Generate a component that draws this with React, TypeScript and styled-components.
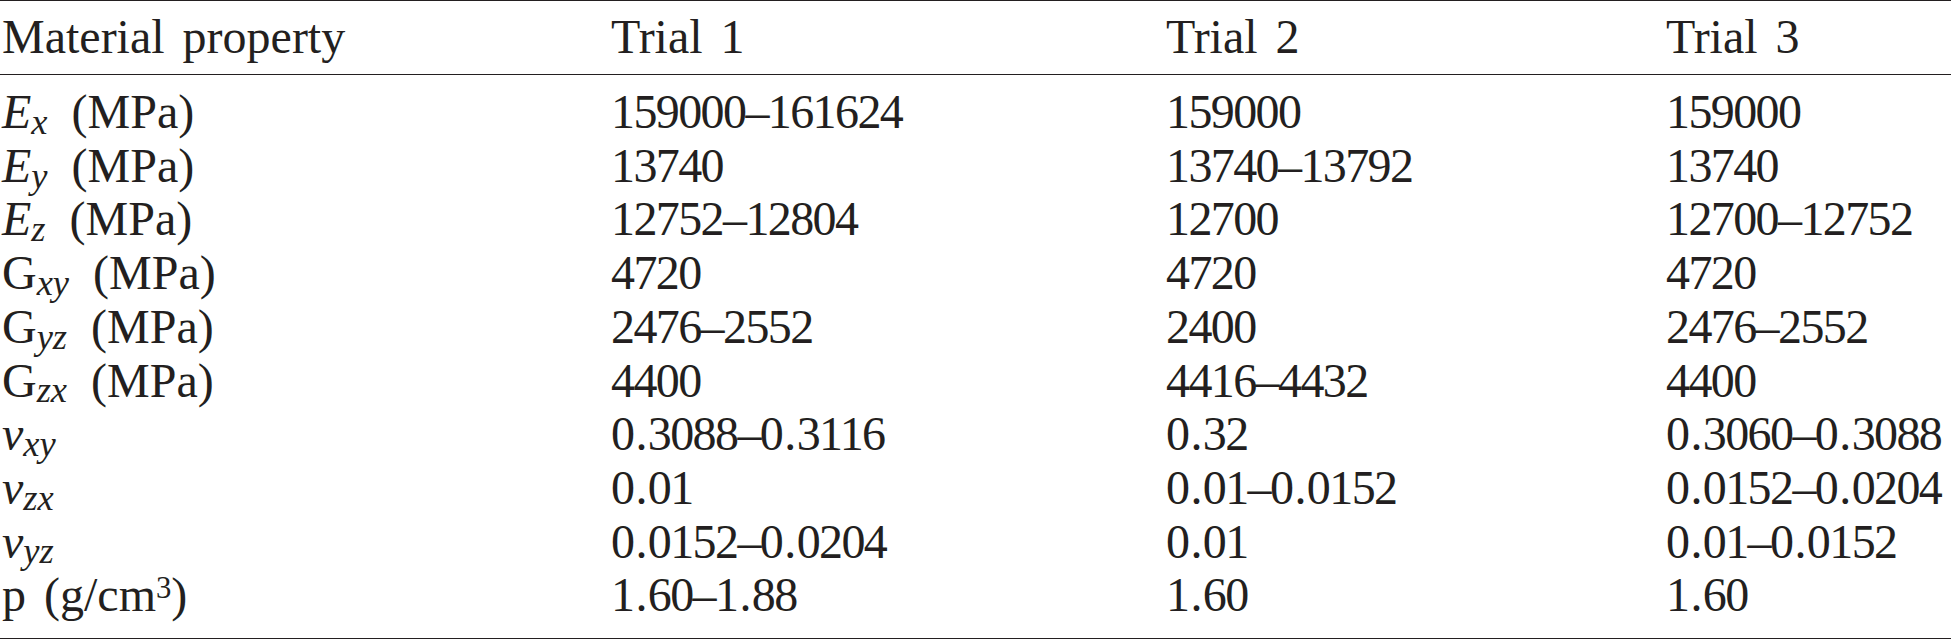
import React from 'react'
import styled, { createGlobalStyle } from 'styled-components'

const GlobalStyle = createGlobalStyle`
  html, body {
    margin: 0;
    padding: 0;
    background: #ffffff;
  }
  body {
    font-family: "Liberation Serif", "Times New Roman", serif;
    color: #231f20;
  }
`

const Table = styled.div`
  width: 1951px;
  border-top: 1px solid #231f20;
  border-bottom: 1px solid #231f20;
  padding-bottom: 16px;
`

const Row = styled.div<{ $head?: boolean }>`
  display: grid;
  grid-template-columns: 609px 555px 500px 1fr;
  padding-left: 2px;
  font-size: 48px;
  line-height: ${(p) => (p.$head ? '48px' : '53.7px')};
  white-space: nowrap;
  ${(p) =>
    p.$head &&
    `
    padding-top: 12px;
    padding-bottom: 13px;
    border-bottom: 1px solid #231f20;
    margin-bottom: 10px;
  `}
`

const Cell = styled.div`
  letter-spacing: -1.6px;
`

const Dot = styled.span`
  margin: 0 2px;
`

const HeadCell = styled.div`
  word-spacing: 6px;
`

const Sym = styled.span<{ $upright?: boolean }>`
  font-style: ${(p) => (p.$upright ? 'normal' : 'italic')};
`

const Sub = styled.sub`
  font-style: italic;
  font-size: 0.76em;
  vertical-align: -0.16em;
  line-height: 0;
  margin-right: 6px;
`

const Sup = styled.sup`
  font-size: 0.64em;
  vertical-align: 0.42em;
  line-height: 0;
`

type RowData = {
  label: React.ReactNode
  values: string[]
}

const mpa = (sym: string, sub: string, upright?: boolean) => (
  <>
    <Sym $upright={upright}>{sym}</Sym>
    <Sub>{sub}</Sub> (MPa)
  </>
)

const ratio = (sub: string) => (
  <>
    <Sym>v</Sym>
    <Sub>{sub}</Sub>
  </>
)

const rows: RowData[] = [
  { label: mpa('E', 'x'), values: ['159000–161624', '159000', '159000'] },
  { label: mpa('E', 'y'), values: ['13740', '13740–13792', '13740'] },
  { label: mpa('E', 'z'), values: ['12752–12804', '12700', '12700–12752'] },
  { label: mpa('G', 'xy', true), values: ['4720', '4720', '4720'] },
  { label: mpa('G', 'yz', true), values: ['2476–2552', '2400', '2476–2552'] },
  { label: mpa('G', 'zx', true), values: ['4400', '4416–4432', '4400'] },
  { label: ratio('xy'), values: ['0.3088–0.3116', '0.32', '0.3060–0.3088'] },
  { label: ratio('zx'), values: ['0.01', '0.01–0.0152', '0.0152–0.0204'] },
  { label: ratio('yz'), values: ['0.0152–0.0204', '0.01', '0.01–0.0152'] },
  {
    label: (
      <>
        p (g/cm<Sup>3</Sup>)
      </>
    ),
    values: ['1.60–1.88', '1.60', '1.60'],
  },
]

// the periods sit a little wider in the printed table
const renderValue = (value: string) =>
  value.split('.').map((part, i) => (
    <React.Fragment key={i}>
      {i > 0 && <Dot>.</Dot>}
      {part}
    </React.Fragment>
  ))

const App = (): JSX.Element => {
  return (
    <>
      <GlobalStyle />
      <Table>
        <Row $head>
          <HeadCell>Material property</HeadCell>
          <HeadCell>Trial 1</HeadCell>
          <HeadCell>Trial 2</HeadCell>
          <HeadCell>Trial 3</HeadCell>
        </Row>
        {rows.map((row, i) => (
          <Row key={i}>
            <HeadCell>{row.label}</HeadCell>
            {row.values.map((v, j) => (
              <Cell key={j}>{renderValue(v)}</Cell>
            ))}
          </Row>
        ))}
      </Table>
    </>
  )
}

export default App
